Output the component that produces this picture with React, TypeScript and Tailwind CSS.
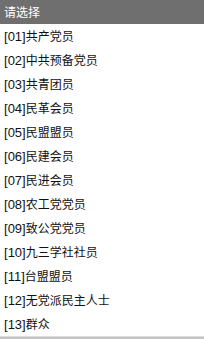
const opciones = [
  ['01', '共产党员'],
  ['02', '中共预备党员'],
  ['03', '共青团员'],
  ['04', '民革会员'],
  ['05', '民盟盟员'],
  ['06', '民建会员'],
  ['07', '民进会员'],
  ['08', '农工党党员'],
  ['09', '致公党党员'],
  ['10', '九三学社社员'],
  ['11', '台盟盟员'],
  ['12', '无党派民主人士'],
  ['13', '群众'],
];

export default function App() {
  return (
    <div
      className="w-[204px] h-[339px] overflow-hidden bg-white flex flex-col"
      style={{ fontFamily: '"Noto Sans CJK SC", sans-serif' }}
    >
      <div className="h-[24px] shrink-0 bg-[#6f6f6f] text-white text-[12px] leading-[24px] pl-[4px]">
        请选择
      </div>
      {opciones.map(([codigo, nombre]) => (
        <div
          key={codigo}
          className="h-[24px] shrink-0 text-[12px] leading-[24px] pl-[4px] text-[#111]"
        >
          <span className="text-[13px] font-['Liberation_Sans']">[{codigo}]</span>
          {nombre}
        </div>
      ))}
      <div className="flex-1 bg-[#c4c4c4] border-t border-[#dcdcdc]" />
    </div>
  );
}
